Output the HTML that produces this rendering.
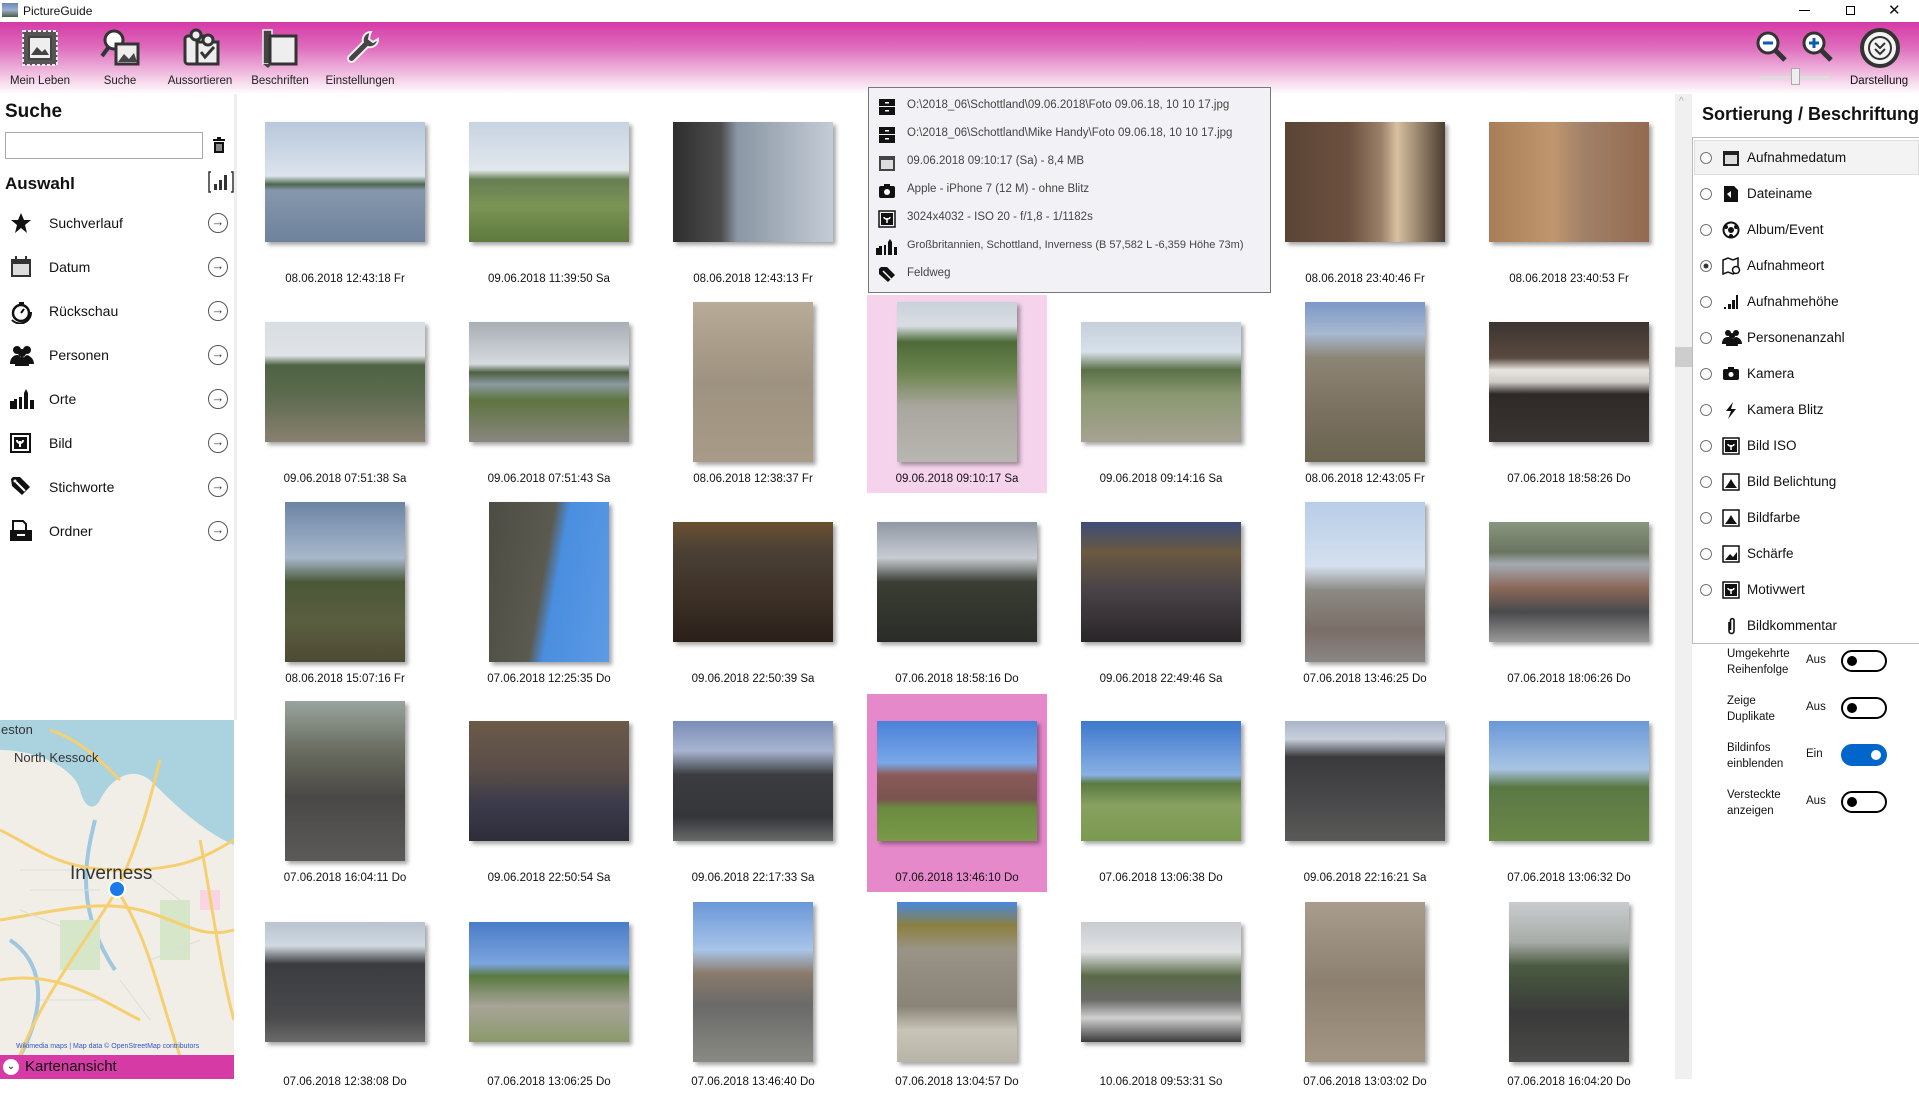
<!DOCTYPE html>
<html><head><meta charset="utf-8">
<style>
*{box-sizing:border-box;margin:0;padding:0}
body{width:1919px;height:1079px;overflow:hidden;background:#fff;font-family:"Liberation Sans",sans-serif;color:#111;position:relative}
.a{position:absolute}
.tb{left:0;top:22px;width:1919px;height:72px;background:linear-gradient(#d53aa6 0,#de6cbc 35%,#f2c6e4 75%,#fff 100%)}
.tl{position:absolute;font-size:11.5px;color:#222;text-align:center;width:80px;top:75px;white-space:nowrap}
.c{position:absolute;width:180px;height:199px}
.L{position:absolute;left:10px;top:27px;width:160px;height:120px;box-shadow:3px 3px 4px rgba(0,0,0,.35)}
.P{position:absolute;left:30px;top:7px;width:120px;height:160px;box-shadow:3px 3px 4px rgba(0,0,0,.35)}
.lb{position:absolute;top:178px;width:180px;text-align:center;font-size:11.5px;color:#111}
.li{position:absolute;left:0;width:235px;height:30px}
.li .t{position:absolute;left:49px;top:7px;font-size:14px}
.li .ar{position:absolute;left:208px;top:5px;width:20px;height:20px;border:1.5px solid #555;border-radius:50%;font-size:13px;line-height:16px;text-align:center;color:#444}
.li svg{position:absolute;left:10px;top:4px}
.tt{font-size:11.5px;color:#444;position:absolute;left:39px;white-space:nowrap}
.ri{position:absolute;left:1693px;width:222px;height:36px}
.ri .rd{position:absolute;left:7px;top:12px;width:12px;height:12px;border:1px solid #777;border-radius:50%;background:#fff}
.ri .t{position:absolute;left:54px;top:10px;font-size:13.5px}
.ri svg{position:absolute;left:29px;top:9px}
.tg{position:absolute;width:200px;height:44px}
.tg .t{position:absolute;left:0;top:0;font-size:11.5px;line-height:16px;width:70px}
.tg .v{position:absolute;top:8px;font-size:11.5px}
.tg .s{position:absolute;top:4px;width:46px;height:22px;border:2px solid #000;border-radius:11px}
.tg .s i{position:absolute;left:4px;top:4px;width:10px;height:10px;border-radius:50%;background:#000}
.tg .s.on{background:#0066cc;border-color:#0066cc}
.tg .s.on i{left:auto;right:4px;background:#fff}
</style></head><body>
<div class="a" style="left:0;top:0;width:1919px;height:22px;background:#fff"></div>
<div class="a" style="left:2px;top:3px;width:16px;height:14px;background:linear-gradient(#6b86b5,#9cb0cf 50%,#4d5b3d)"></div>
<div class="a" style="left:23px;top:4px;font-size:12px">PictureGuide</div>
<div class="a" style="left:1799px;top:10px;width:11px;height:1px;background:#000"></div>
<div class="a" style="left:1846px;top:6px;width:9px;height:9px;border:1px solid #000;background:#fff"></div>
<div class="a" style="left:1888px;top:1px;font-size:15px">✕</div>
<div class="a tb"></div>
<svg class="a" style="left:20px;top:28px" width="42" height="40"><rect x="3" y="3" width="34" height="34" fill="#555" stroke="#eee" stroke-width="2" stroke-dasharray="3 2"/><rect x="9" y="9" width="22" height="22" fill="#eee" stroke="#444" stroke-width="2"/><path d="M11 27l6-8 5 5 3-3 4 6z" fill="#444"/></svg>
<svg class="a" style="left:100px;top:28px" width="44" height="40"><circle cx="14" cy="12" r="9" fill="#fff" stroke="#333" stroke-width="3"/><path d="M8 20l-6 8" stroke="#333" stroke-width="4"/><rect x="16" y="16" width="22" height="20" fill="#eee" stroke="#333" stroke-width="3"/><path d="M18 34l6-8 5 5 5-6 3 9z" fill="#444"/></svg>
<svg class="a" style="left:182px;top:28px" width="40" height="40"><rect x="3" y="8" width="22" height="28" rx="3" fill="#eee" stroke="#333" stroke-width="3"/><circle cx="14" cy="7" r="5" fill="#eee" stroke="#333" stroke-width="3"/><rect x="15" y="14" width="21" height="22" fill="#eee" stroke="#333" stroke-width="3"/><circle cx="26" cy="12" r="5" fill="#eee" stroke="#333" stroke-width="3"/><path d="M19 24l4 5 9-10" stroke="#333" stroke-width="3" fill="none"/></svg>
<svg class="a" style="left:260px;top:28px" width="40" height="40"><rect x="3" y="2" width="9" height="34" fill="#444" stroke="#eee" stroke-width="1.5"/><rect x="10" y="8" width="26" height="28" fill="#eee" stroke="#333" stroke-width="3"/><path d="M3 36l5 4 4-4" fill="#444"/></svg>
<svg class="a" style="left:343px;top:28px" width="36" height="40"><path d="M28 4a8 8 0 0 0-8 10L6 28a3 3 0 0 0 5 5L25 19a8 8 0 0 0 10-8l-5 3-4-3 1-5z" fill="#444" stroke="#eee" stroke-width="2"/></svg>
<div class="tl" style="left:0">Mein Leben</div>
<div class="tl" style="left:80px">Suche</div>
<div class="tl" style="left:160px">Aussortieren</div>
<div class="tl" style="left:240px">Beschriften</div>
<div class="tl" style="left:320px">Einstellungen</div>
<svg class="a" style="left:1755px;top:30px" width="36" height="34"><circle cx="13" cy="13" r="10" fill="#fff" stroke="#333" stroke-width="3"/><path d="M8 13h10" stroke="#0b5ea8" stroke-width="3"/><path d="M20 20l10 10" stroke="#333" stroke-width="5"/></svg>
<svg class="a" style="left:1801px;top:30px" width="36" height="34"><circle cx="13" cy="13" r="10" fill="#fff" stroke="#333" stroke-width="3"/><path d="M8 13h10M13 8v10" stroke="#0b5ea8" stroke-width="3"/><path d="M20 20l10 10" stroke="#333" stroke-width="5"/></svg>
<div class="a" style="left:1760px;top:76px;width:70px;height:3px;background:#ddd"></div>
<div class="a" style="left:1791px;top:68px;width:9px;height:17px;background:#eee;border:1px solid #aaa"></div>
<svg class="a" style="left:1860px;top:28px" width="42" height="42"><circle cx="20" cy="20" r="18" fill="#f4f4f4" stroke="#333" stroke-width="4"/><circle cx="20" cy="20" r="11" fill="none" stroke="#333" stroke-width="2"/><path d="M15 15l5 5 5-5M15 21l5 5 5-5" stroke="#333" stroke-width="2" fill="none"/></svg>
<div class="a" style="left:1850px;top:75px;font-size:11.5px">Darstellung</div>

<div class="a" style="left:234px;top:94px;width:3px;height:626px;background:#eee"></div>
<div class="a" style="left:5px;top:101px;font-size:19px;font-weight:bold">Suche</div>
<div class="a" style="left:5px;top:132px;width:198px;height:27px;border:1px solid #aaa"></div>
<svg class="a" style="left:212px;top:137px" width="14" height="16"><rect x="1" y="2" width="12" height="2" fill="#111"/><rect x="5" y="0" width="4" height="2" fill="#111"/><rect x="2" y="5" width="10" height="11" fill="#111"/><path d="M5 7v7M7 7v7M9 7v7" stroke="#fff" stroke-width="1"/></svg>
<div class="a" style="left:5px;top:174px;font-size:17px;font-weight:bold">Auswahl</div>
<svg class="a" style="left:208px;top:170px" width="26" height="24"><path d="M3 2H1v20h2M23 2h2v20h-2" stroke="#333" stroke-width="1.5" fill="none"/><rect x="6" y="14" width="3" height="6" fill="#333"/><rect x="11" y="10" width="3" height="10" fill="#333"/><rect x="16" y="5" width="3" height="15" fill="#333"/></svg>
<div class="li" style="top:208px"><svg width="22" height="22"><path d="M11 1l3 7h7l-6 5 2 8-6-5-6 5 2-8-6-5h7z" fill="#111"/></svg><span class="t">Suchverlauf</span><span class="ar">→</span></div>
<div class="li" style="top:252px"><svg width="22" height="22"><rect x="1" y="3" width="20" height="18" fill="#333"/><rect x="3" y="8" width="16" height="11" fill="#ddd"/><rect x="5" y="0" width="2" height="5" fill="#333"/><rect x="15" y="0" width="2" height="5" fill="#333"/></svg><span class="t">Datum</span><span class="ar">→</span></div>
<div class="li" style="top:296px"><svg width="24" height="24"><circle cx="11" cy="13" r="8" fill="none" stroke="#111" stroke-width="2.5"/><path d="M11 13l3-4M9 3h5" stroke="#111" stroke-width="2"/><path d="M2 20a11 11 0 0 0 19-8" stroke="#111" stroke-width="2" fill="none"/></svg><span class="t">Rückschau</span><span class="ar">→</span></div>
<div class="li" style="top:340px"><svg width="24" height="22"><circle cx="7" cy="6" r="4" fill="#111"/><circle cx="17" cy="6" r="4" fill="#111"/><circle cx="12" cy="9" r="4" fill="#111"/><path d="M0 20c0-7 5-9 7-9s5 2 5 9zM12 20c0-7 5-9 5-9s7 2 7 9zM5 22c0-7 4-9 7-9s7 2 7 9z" fill="#111"/></svg><span class="t">Personen</span><span class="ar">→</span></div>
<div class="li" style="top:384px"><svg width="26" height="22"><path d="M0 21V13h4v-2h3v10h2V9h3v12h2V5l2-4 2 4v16h2V12h4v9z" fill="#111"/></svg><span class="t">Orte</span><span class="ar">→</span></div>
<div class="li" style="top:428px"><svg width="22" height="22"><rect x="1" y="2" width="19" height="18" fill="none" stroke="#111" stroke-width="2"/><rect x="4" y="5" width="13" height="12" fill="#111"/><path d="M10 15V9M7 8c0 3 3 3 3 3s3 0 3-3" stroke="#fff" stroke-width="2" fill="none"/></svg><span class="t">Bild</span><span class="ar">→</span></div>
<div class="li" style="top:472px"><svg width="22" height="22"><path d="M1 3l2-2h7l10 10-8 8L2 10z" fill="#111"/><path d="M6 6l9 9" stroke="#fff" stroke-width="2"/><circle cx="5" cy="5" r="1.5" fill="#fff"/></svg><span class="t">Stichworte</span><span class="ar">→</span></div>
<div class="li" style="top:516px"><svg width="22" height="22"><path d="M3 1h10l3 3v7H3z" fill="none" stroke="#111" stroke-width="2"/><rect x="0" y="10" width="22" height="11" fill="#111"/><rect x="7" y="14" width="8" height="2" fill="#fff"/></svg><span class="t">Ordner</span><span class="ar">→</span></div>

<svg class="a" style="left:0;top:720px" width="234" height="336">
<rect width="234" height="336" fill="#f1eee8"/>
<path d="M0 0H234V125C200 110 170 80 150 60 130 45 110 60 100 80 95 90 85 90 80 70 75 50 40 30 0 30z" fill="#aad3df"/>
<path d="M95 100c-10 40-20 90 20 150M10 220c30 20 40 60 10 116" stroke="#9fc8e0" stroke-width="4" fill="none"/>
<rect x="60" y="200" width="40" height="50" fill="#d6e6c8"/><rect x="160" y="180" width="30" height="60" fill="#d6e6c8"/><rect x="200" y="170" width="20" height="20" fill="#f8d4e4"/>
<g stroke="#f6cf70" stroke-width="3" fill="none">
<path d="M0 110C40 130 60 150 120 150S200 140 234 120"/>
<path d="M20 336C40 280 80 230 117 170 140 120 150 80 160 40"/>
<path d="M0 200C60 190 100 180 140 190S200 220 234 210"/>
<path d="M117 170C150 220 160 280 180 336"/>
<path d="M0 260C60 250 100 280 140 300"/>
<path d="M50 10C80 20 100 40 120 60"/>
<path d="M200 120C210 170 220 250 234 300"/>
</g>
<g stroke="#ddd" stroke-width="1" fill="none"><path d="M20 150h60M30 170h70M20 190l50 20M140 150l40 30M150 240l50-20M40 280h60M120 260l30 40"/></g>
<text x="1" y="14" font-size="13" fill="#333" font-family="Liberation Sans">eston</text>
<text x="14" y="42" font-size="13" fill="#333" font-family="Liberation Sans">North Kessock</text>
<text x="70" y="159" font-size="19" fill="#333" font-family="Liberation Sans">Inverness</text>
<circle cx="117" cy="169" r="8" fill="#1a7be6" stroke="#fff" stroke-width="2"/>
<text x="16" y="328" font-size="7" fill="#3355cc" font-family="Liberation Sans">Wikimedia maps | Map data © OpenStreetMap contributors</text>
</svg>
<div class="a" style="left:0;top:1055px;width:234px;height:24px;background:#d63ba5"></div>
<div class="a" style="left:3px;top:1059px;width:16px;height:16px;border-radius:50%;background:#fff;font-size:10px;text-align:center;line-height:16px">⌄</div>
<div class="a" style="left:25px;top:1058px;font-size:15px;color:#111">Kartenansicht</div>

<div class="a" style="left:1675px;top:94px;width:17px;height:985px;background:#f0f0f0"></div>
<div class="a" style="left:1679px;top:96px;font-size:10px;color:#aaa">^</div>
<div class="a" style="left:1675px;top:347px;width:17px;height:20px;background:#cdcdcd"></div>

<div class="a" style="left:867px;top:295px;width:180px;height:198px;background:#f5d3ec"></div>
<div class="a" style="left:867px;top:694px;width:180px;height:198px;background:#e589cb"></div>

<div class="c" style="left:255px;top:95px"><div class="L" style="background:linear-gradient(#b8c8dc 0,#dce3ec 45%,#4c6650 52%,#8697ad 57%,#6f829c 100%)"></div><div class="lb">08.06.2018 12:43:18 Fr</div></div>
<div class="c" style="left:459px;top:95px"><div class="L" style="background:linear-gradient(#c8d4e2 0,#e2e7ec 40%,#667e52 48%,#7a9455 70%,#5e7a3c 100%)"></div><div class="lb">09.06.2018 11:39:50 Sa</div></div>
<div class="c" style="left:663px;top:95px"><div class="L" style="background:linear-gradient(90deg,#2e2e2e 0,#4c4c4c 30%,#8a96a4 40%,#c4ccd6 100%)"></div><div class="lb">08.06.2018 12:43:13 Fr</div></div>
<div class="c" style="left:1275px;top:95px"><div class="L" style="background:linear-gradient(90deg,#5a4535 0,#6c5040 40%,#9a8068 60%,#d8c0a0 70%,#4a3c30 100%)"></div><div class="lb">08.06.2018 23:40:46 Fr</div></div>
<div class="c" style="left:1479px;top:95px"><div class="L" style="background:linear-gradient(90deg,#a87e58,#c0966e 40%,#a08068 60%,#946a50 100%)"></div><div class="lb">08.06.2018 23:40:53 Fr</div></div>

<div class="c" style="left:255px;top:295px"><div class="L" style="background:linear-gradient(#d8dee4 0,#e0e3e6 28%,#4e6444 36%,#5c6a4e 60%,#8a8070 100%)"></div><div class="lb">09.06.2018 07:51:38 Sa</div></div>
<div class="c" style="left:459px;top:295px"><div class="L" style="background:linear-gradient(#a8aeb4 0,#d6dadf 35%,#4e6044 42%,#8a9aa0 52%,#5e7440 65%,#8a8680 100%)"></div><div class="lb">09.06.2018 07:51:43 Sa</div></div>
<div class="c" style="left:663px;top:295px"><div class="P" style="background:linear-gradient(#b8ac98,#9e9280 50%,#a89c88)"></div><div class="lb">08.06.2018 12:38:37 Fr</div></div>
<div class="c" style="left:867px;top:295px"><div class="P" style="background:linear-gradient(#c8d2da 0,#d8dde2 15%,#4c6a38 25%,#6e8650 45%,#a8a69e 65%,#b8b6b0 100%)"></div><div class="lb">09.06.2018 09:10:17 Sa</div></div>
<div class="c" style="left:1071px;top:295px"><div class="L" style="background:linear-gradient(#c4d0dc 0,#d8e0e8 25%,#5a7048 40%,#8a9870 60%,#a8a294 100%)"></div><div class="lb">09.06.2018 09:14:16 Sa</div></div>
<div class="c" style="left:1275px;top:295px"><div class="P" style="background:linear-gradient(#7c98c8 0,#a8b8d0 20%,#8c8474 35%,#7a7060 70%,#6a6450 100%)"></div><div class="lb">08.06.2018 12:43:05 Fr</div></div>
<div class="c" style="left:1479px;top:295px"><div class="L" style="background:linear-gradient(#3c3430 0,#5a4a40 30%,#e8e4e0 40%,#d0ccc8 50%,#2e2a28 60%,#3a3432 100%)"></div><div class="lb">07.06.2018 18:58:26 Do</div></div>

<div class="c" style="left:255px;top:495px"><div class="P" style="background:linear-gradient(#6c84a4 0,#a8b8cc 35%,#4a5838 50%,#5a5e40 75%,#4e4a34 100%)"></div><div class="lb">08.06.2018 15:07:16 Fr</div></div>
<div class="c" style="left:459px;top:495px"><div class="P" style="background:linear-gradient(100deg,#4c4c44 0,#5a5a50 45%,#4a8ee0 55%,#5c9ae4 100%)"></div><div class="lb">07.06.2018 12:25:35 Do</div></div>
<div class="c" style="left:663px;top:495px"><div class="L" style="background:linear-gradient(#6a5030 0,#4a4036 25%,#3e3228 60%,#2a201a 100%)"></div><div class="lb">09.06.2018 22:50:39 Sa</div></div>
<div class="c" style="left:867px;top:495px"><div class="L" style="background:linear-gradient(#9098a4 0,#c8ccd2 30%,#3a3e34 50%,#2a2c28 100%)"></div><div class="lb">07.06.2018 18:58:16 Do</div></div>
<div class="c" style="left:1071px;top:495px"><div class="L" style="background:linear-gradient(#3c4c78 0,#6a5a40 25%,#4a4448 55%,#2a2628 100%)"></div><div class="lb">09.06.2018 22:49:46 Sa</div></div>
<div class="c" style="left:1275px;top:495px"><div class="P" style="background:linear-gradient(#b8cde8 0,#d4e0ee 40%,#8c8a84 55%,#7a6e68 80%,#8a8684 100%)"></div><div class="lb">07.06.2018 13:46:25 Do</div></div>
<div class="c" style="left:1479px;top:495px"><div class="L" style="background:linear-gradient(#8a9680 0,#6a7460 25%,#a4aab2 35%,#8a6858 55%,#4a4a4c 75%,#9a9a9a 100%)"></div><div class="lb">07.06.2018 18:06:26 Do</div></div>

<div class="c" style="left:255px;top:694px"><div class="P" style="background:linear-gradient(#9aa4a0 0,#6a6e60 30%,#4a4846 60%,#5a5a58 100%)"></div><div class="lb">07.06.2018 16:04:11 Do</div></div>
<div class="c" style="left:459px;top:694px"><div class="L" style="background:linear-gradient(#6a5a48 0,#5a4e48 40%,#3a3a4a 70%,#2e2e3a 100%)"></div><div class="lb">09.06.2018 22:50:54 Sa</div></div>
<div class="c" style="left:663px;top:694px"><div class="L" style="background:linear-gradient(#7a8eb8 0,#a8b4d0 25%,#3a3c40 45%,#34363a 80%,#6a6a6a 100%)"></div><div class="lb">09.06.2018 22:17:33 Sa</div></div>
<div class="c" style="left:867px;top:694px"><div class="L" style="background:linear-gradient(#4a82d8 0,#7aa8e8 35%,#8a5a58 45%,#7a5450 65%,#6a8a40 72%,#7a9a48 100%)"></div><div class="lb">07.06.2018 13:46:10 Do</div></div>
<div class="c" style="left:1071px;top:694px"><div class="L" style="background:linear-gradient(#3c78cc 0,#8ab0e4 45%,#5a7a40 52%,#88a060 70%,#7a9a50 100%)"></div><div class="lb">07.06.2018 13:06:38 Do</div></div>
<div class="c" style="left:1275px;top:694px"><div class="L" style="background:linear-gradient(#a8b4c8 0,#c8d0dc 15%,#3a3a3c 30%,#4a4a4c 70%,#5a5a58 100%)"></div><div class="lb">09.06.2018 22:16:21 Sa</div></div>
<div class="c" style="left:1479px;top:694px"><div class="L" style="background:linear-gradient(#6a98d8 0,#a8c4e4 40%,#5a7844 55%,#6a8848 100%)"></div><div class="lb">07.06.2018 13:06:32 Do</div></div>

<div class="c" style="left:255px;top:895px"><div class="L" style="background:linear-gradient(#b8c4d0 0,#d0d8e0 20%,#3a3c40 35%,#4a4a4c 80%,#6a6a6a 100%)"></div><div class="lb" style="top:181px">07.06.2018 12:38:08 Do</div></div>
<div class="c" style="left:459px;top:895px"><div class="L" style="background:linear-gradient(#4a7cc8 0,#7aa4dc 35%,#5a7a40 45%,#a8a498 70%,#8a9a6a 100%)"></div><div class="lb" style="top:181px">07.06.2018 13:06:25 Do</div></div>
<div class="c" style="left:663px;top:895px"><div class="P" style="background:linear-gradient(#6a98d8 0,#a8c4e8 30%,#8a7a6a 45%,#6a6a6a 65%,#8a8a84 100%)"></div><div class="lb" style="top:181px">07.06.2018 13:46:40 Do</div></div>
<div class="c" style="left:867px;top:895px"><div class="P" style="background:linear-gradient(#4a88dc 0,#8c8040 15%,#9a9488 30%,#8a8478 65%,#c8c4b8 80%,#b8b4a8 100%)"></div><div class="lb" style="top:181px">07.06.2018 13:04:57 Do</div></div>
<div class="c" style="left:1071px;top:895px"><div class="L" style="background:linear-gradient(#c8ccd0 0,#e0e2e4 25%,#5a6a48 45%,#6a6a68 65%,#d0d0d0 80%,#3a3a3a 100%)"></div><div class="lb" style="top:181px">10.06.2018 09:53:31 So</div></div>
<div class="c" style="left:1275px;top:895px"><div class="P" style="background:linear-gradient(#a89c8c,#8c8070 50%,#a49684)"></div><div class="lb" style="top:181px">07.06.2018 13:03:02 Do</div></div>
<div class="c" style="left:1479px;top:895px"><div class="P" style="background:linear-gradient(#c8ccd0 0,#a8aca8 25%,#4a5a40 40%,#3a3a3a 70%,#4a4a48 100%)"></div><div class="lb" style="top:181px">07.06.2018 16:04:20 Do</div></div>

<div class="a" style="left:868px;top:87px;width:403px;height:206px;background:#f2f2f6;border:1px solid #777"></div>
<div class="a" style="left:868px;top:87px;width:403px;height:206px">
<svg class="a" style="left:10px;top:11px" width="18" height="18"><rect x="1" y="1" width="16" height="7" fill="#111"/><rect x="1" y="9" width="16" height="8" fill="#111"/><rect x="7" y="4" width="4" height="1.5" fill="#fff"/><rect x="7" y="12" width="4" height="1.5" fill="#fff"/></svg><div class="tt" style="top:12px">O:\2018_06\Schottland\09.06.2018\Foto 09.06.18, 10 10 17.jpg</div>
<svg class="a" style="left:10px;top:39px" width="18" height="18"><rect x="1" y="1" width="16" height="7" fill="#111"/><rect x="1" y="9" width="16" height="8" fill="#111"/><rect x="7" y="4" width="4" height="1.5" fill="#fff"/><rect x="7" y="12" width="4" height="1.5" fill="#fff"/></svg><div class="tt" style="top:40px">O:\2018_06\Schottland\Mike Handy\Foto 09.06.18, 10 10 17.jpg</div>
<svg class="a" style="left:10px;top:67px" width="18" height="18"><rect x="1" y="2" width="16" height="15" fill="#444"/><rect x="3" y="6" width="12" height="9" fill="#ddd"/></svg><div class="tt" style="top:68px">09.06.2018 09:10:17 (Sa) - 8,4 MB</div>
<svg class="a" style="left:10px;top:95px" width="18" height="18"><rect x="1" y="4" width="16" height="12" rx="2" fill="#111"/><rect x="6" y="2" width="6" height="3" fill="#111"/><circle cx="9" cy="10" r="3" fill="#fff"/></svg><div class="tt" style="top:96px">Apple - iPhone 7 (12 M) - ohne Blitz</div>
<svg class="a" style="left:10px;top:123px" width="18" height="18"><rect x="1" y="1" width="16" height="16" fill="none" stroke="#111" stroke-width="1.5"/><rect x="3" y="3" width="12" height="12" fill="#111"/><path d="M9 13V8M6 7c0 2 3 2 3 2s3 0 3-2" stroke="#fff" stroke-width="1.5" fill="none"/></svg><div class="tt" style="top:124px">3024x4032 - ISO 20 - f/1,8 - 1/1182s</div>
<svg class="a" style="left:8px;top:151px" width="22" height="18"><path d="M0 17V10h3V8h3v9h2V7h2v10h2V4l2-3 2 3v13h2V9h3v8z" fill="#111"/></svg><div class="tt" style="top:152px;font-size:11px">Großbritannien, Schottland, Inverness (B 57,582 L -6,359 Höhe 73m)</div>
<svg class="a" style="left:10px;top:179px" width="18" height="18"><path d="M1 3l2-2h6l8 8-7 7L1 8z" fill="#111"/><path d="M5 5l8 8" stroke="#fff" stroke-width="1.5"/></svg><div class="tt" style="top:180px">Feldweg</div>
</div>

<div class="a" style="left:1702px;top:104px;font-size:18px;font-weight:bold;color:#111;white-space:nowrap">Sortierung / Beschriftung</div>
<div class="a" style="left:1692px;top:137px;width:227px;height:507px;border-left:1px solid #bbb;border-top:1px solid #bbb;border-bottom:1px solid #bbb"></div>
<div class="a" style="left:1694px;top:140px;width:225px;height:35px;background:#f3f3f3;border:1px solid #ddd"></div>
<div class="ri" style="top:140px"><i class="rd"></i><svg width="18" height="18"><rect x="1" y="2" width="16" height="15" fill="#222"/><rect x="3" y="6" width="12" height="9" fill="#ddd"/></svg><span class="t">Aufnahmedatum</span></div>
<div class="ri" style="top:176px"><i class="rd"></i><svg width="18" height="18"><path d="M2 1h10l4 4v12H2z" fill="#111"/><path d="M5 9l4-3v7z" fill="#fff"/></svg><span class="t">Dateiname</span></div>
<div class="ri" style="top:212px"><i class="rd"></i><svg width="18" height="18"><circle cx="9" cy="9" r="7.5" fill="none" stroke="#111" stroke-width="2"/><circle cx="9" cy="9" r="3" fill="#111"/><circle cx="4" cy="6" r="2" fill="#111"/><circle cx="14" cy="6" r="2" fill="#111"/><circle cx="9" cy="15" r="2" fill="#111"/></svg><span class="t">Album/Event</span></div>
<div class="ri" style="top:248px"><i class="rd" style="background:radial-gradient(#333 30%,#fff 40%)"></i><svg width="20" height="18"><path d="M1 3l5-2 5 2 5-2v14l-5 2-5-2-5 2z" fill="none" stroke="#111" stroke-width="1.5"/><circle cx="14" cy="13" r="3.5" fill="#fff" stroke="#111" stroke-width="1.5"/></svg><span class="t">Aufnahmeort</span></div>
<div class="ri" style="top:284px"><i class="rd"></i><svg width="18" height="18"><rect x="2" y="14" width="2" height="2" fill="#111"/><rect x="6" y="11" width="3" height="5" fill="#111"/><rect x="10" y="7" width="3" height="9" fill="#111"/><rect x="14" y="2" width="2" height="14" fill="#111"/></svg><span class="t">Aufnahmehöhe</span></div>
<div class="ri" style="top:320px"><i class="rd"></i><svg width="20" height="18"><circle cx="6" cy="4" r="3" fill="#111"/><circle cx="14" cy="4" r="3" fill="#111"/><circle cx="10" cy="7" r="3" fill="#111"/><path d="M0 15c0-6 4-7 6-7s4 1 4 7zM10 15c0-6 4-7 4-7s6 1 6 7zM4 17c0-6 3-7 6-7s6 1 6 7z" fill="#111"/></svg><span class="t">Personenanzahl</span></div>
<div class="ri" style="top:356px"><i class="rd"></i><svg width="18" height="18"><rect x="1" y="4" width="16" height="11" rx="2" fill="#111"/><rect x="6" y="2" width="6" height="3" fill="#111"/><circle cx="9" cy="9.5" r="2.5" fill="#fff"/></svg><span class="t">Kamera</span></div>
<div class="ri" style="top:392px"><i class="rd"></i><svg width="18" height="18"><path d="M11 1L4 10h5l-3 8 8-10H9z" fill="#111"/></svg><span class="t">Kamera Blitz</span></div>
<div class="ri" style="top:428px"><i class="rd"></i><svg width="18" height="18"><rect x="1" y="1" width="16" height="16" fill="none" stroke="#111" stroke-width="1.5"/><rect x="3" y="3" width="12" height="12" fill="#111"/><path d="M9 13V8M6 7c0 2 3 2 3 2s3 0 3-2" stroke="#fff" stroke-width="1.5" fill="none"/></svg><span class="t">Bild ISO</span></div>
<div class="ri" style="top:464px"><i class="rd"></i><svg width="18" height="18"><rect x="1" y="1" width="16" height="16" fill="none" stroke="#111" stroke-width="1.5"/><path d="M3 15h12l-3-4-3-5-3 5z" fill="#111"/></svg><span class="t">Bild Belichtung</span></div>
<div class="ri" style="top:500px"><i class="rd"></i><svg width="18" height="18"><rect x="1" y="1" width="16" height="16" fill="none" stroke="#111" stroke-width="1.5"/><path d="M3 15h12l-3-4-3-5-3 5z" fill="#111"/></svg><span class="t">Bildfarbe</span></div>
<div class="ri" style="top:536px"><i class="rd"></i><svg width="18" height="18"><rect x="1" y="1" width="16" height="16" fill="none" stroke="#111" stroke-width="1.5"/><path d="M3 15l5-6 3 3 4-5v8z" fill="#111"/></svg><span class="t">Schärfe</span></div>
<div class="ri" style="top:572px"><i class="rd"></i><svg width="18" height="18"><rect x="1" y="1" width="16" height="16" fill="none" stroke="#111" stroke-width="1.5"/><rect x="3" y="3" width="12" height="12" fill="#111"/><path d="M9 13V8M6 7c0 2 3 2 3 2s3 0 3-2" stroke="#fff" stroke-width="1.5" fill="none"/></svg><span class="t">Motivwert</span></div>
<div class="ri" style="top:608px"><svg width="18" height="18"><path d="M7 5v9a2.5 2.5 0 0 0 5 0V3a1.8 1.8 0 0 0-3.5 0v10" stroke="#111" stroke-width="1.6" fill="none"/></svg><span class="t">Bildkommentar</span></div>

<div class="tg" style="top:646px;left:1727px"><div class="t">Umgekehrte Reihenfolge</div><div class="v" style="left:79px">Aus</div><div class="s" style="left:114px"><i></i></div></div>
<div class="tg" style="top:693px;left:1727px"><div class="t">Zeige Duplikate</div><div class="v" style="left:79px">Aus</div><div class="s" style="left:114px"><i></i></div></div>
<div class="tg" style="top:740px;left:1727px"><div class="t">Bildinfos einblenden</div><div class="v" style="left:79px">Ein</div><div class="s on" style="left:114px"><i></i></div></div>
<div class="tg" style="top:787px;left:1727px"><div class="t">Versteckte anzeigen</div><div class="v" style="left:79px">Aus</div><div class="s" style="left:114px"><i></i></div></div>
</body></html>
